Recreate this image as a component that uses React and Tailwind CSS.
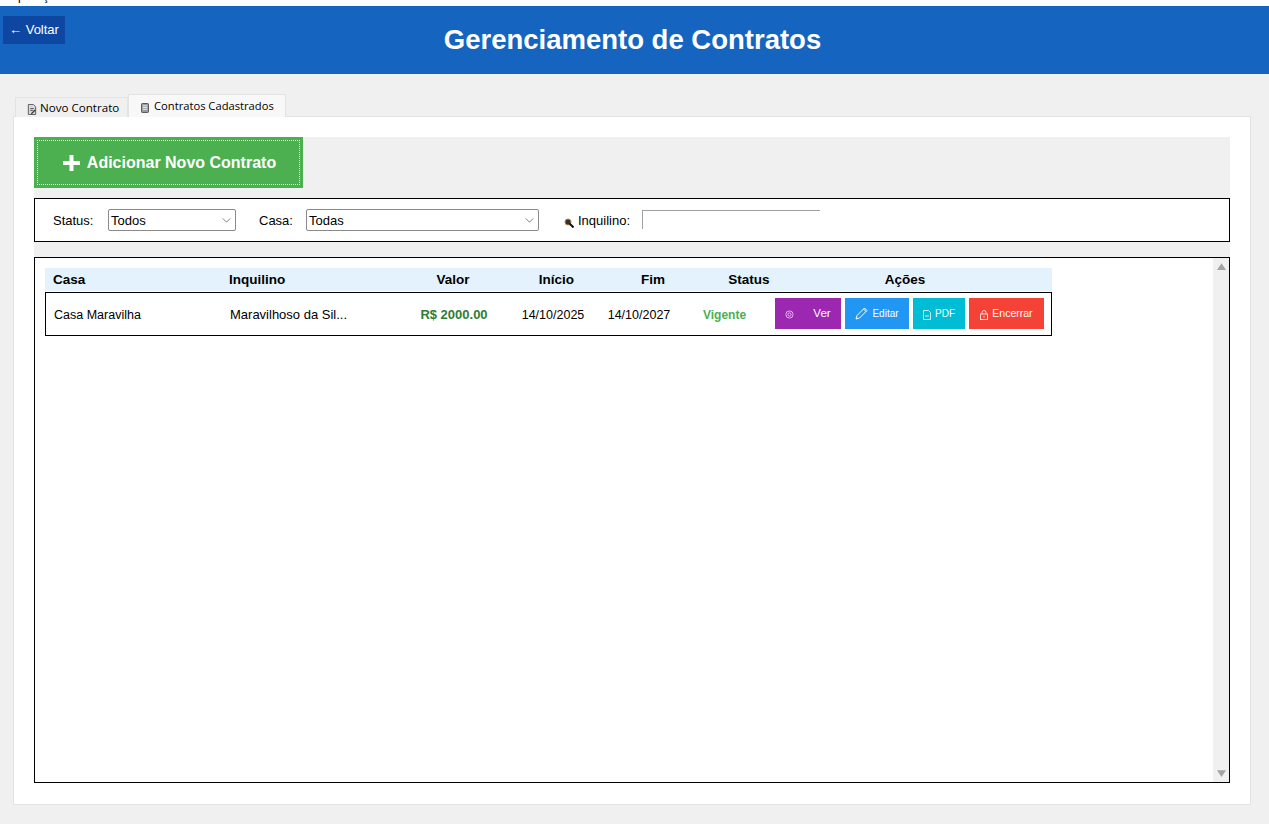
import React from 'react';

const ui = { fontFamily: '"Liberation Sans", Arial, sans-serif' };
const tabFont = { fontFamily: '"Open Sans", "Noto Sans", sans-serif' };

// small raster-like icons from the original app
const DocIcon = ({ className }) => (
  <svg viewBox="0 0 10 12" className={className}>
    <path d="M1 .5h5.500L9 3v8.500H1z" fill="#d9d9d9" stroke="#555" />
    <path d="M3 5h4M3 7h3" stroke="#555" />
    <path d="M4 10l4-4 1 1-4 4H4z" fill="#333" />
  </svg>
);

const BookIcon = ({ className }) => (
  <svg viewBox="0 0 9 11" className={className}>
    <rect x=".5" y=".5" width="8" height="10" rx="1" fill="#9aa0a0" stroke="#444" />
    <path d="M2 3h5M2 5h5M2 7h5" stroke="#eee" />
  </svg>
);

const SearchIcon = () => (
  <svg viewBox="0 0 10 10" className="w-[10px] h-[10px] mt-[5px]">
    <circle cx="4" cy="4" r="3" fill="#333" stroke="#b5804a" />
    <path d="M5.500 5.500L9.500 9.500" stroke="#111" strokeWidth="2" />
  </svg>
);

const Chevron = () => (
  <svg viewBox="0 0 10 6" className="w-[9px] h-[5px]" fill="none" stroke="#666">
    <path d="M.5.5L5 5 9.500.5" />
  </svg>
);

const EyeIcon = () => (
  <svg viewBox="0 0 10 10" className="w-[9px] h-[9px] mt-[3px]" fill="none" stroke="#e6c4ec">
    <circle cx="5" cy="5" r="4" />
    <circle cx="5" cy="5" r="1.800" />
  </svg>
);

const PencilIcon = () => (
  <svg viewBox="0 0 13 13" className="w-[13px] h-[13px]" fill="none" stroke="#fff">
    <path d="M1 12l1-3.500L9.500 1 12 3.500 4.500 11z" />
    <path d="M8.500 2l2.500 2.500" />
  </svg>
);

const PageIcon = () => (
  <svg viewBox="0 0 8 10" className="w-[8px] h-[10px] mt-[3px]" fill="none" stroke="#c9eef4">
    <path d="M.5.5h5l2 2v7H.5z" />
    <path d="M2 6h4" />
  </svg>
);

const LockIcon = () => (
  <svg viewBox="0 0 8 10" className="w-[8px] h-[10px] mt-[3px]" fill="none" stroke="#ffdcd8">
    <rect x=".5" y="4" width="7" height="5.500" />
    <path d="M2 4V2.500a2 2 0 014 0V4M4 6v1.500" />
  </svg>
);

const columns = [
  { label: 'Casa', cls: 'w-[184px] pl-2 text-left' },
  { label: 'Inquilino', cls: 'w-[180px] text-left' },
  { label: 'Valor', cls: 'w-[88px] text-center' },
  { label: 'Início', cls: 'w-[119px] text-center' },
  { label: 'Fim', cls: 'w-[74px] text-center' },
  { label: 'Status', cls: 'w-[118px] text-center' },
  { label: 'Ações', cls: 'w-[194px] text-center' },
];

const ActionButton = ({ color, width, children }) => (
  <div className={`flex items-center justify-center h-[31px] text-white ${color} ${width}`}>
    {children}
  </div>
);

const App = () => {
  return (
    <div className="relative w-[1269px] h-[824px] overflow-hidden bg-[#f0f0f0] flex flex-col" style={ui}>
      {/* strip of the window above, only the bottoms of the letters show */}
      <div className="h-[6px] bg-white overflow-hidden relative">
        <span className="absolute left-[10px] top-[-13px] text-[12px] text-black">Aplicação</span>
      </div>

      {/* header */}
      <div className="relative h-[68px] bg-[#1565c0] flex justify-center pt-[15px] pr-[4px]">
        <h1 className="text-[27.5px] leading-[38px] font-bold text-white">Gerenciamento de Contratos</h1>
        <div className="absolute left-[3px] top-[10px] w-[62px] h-[28px] bg-[#0d47a1] text-white text-[13px] flex items-center justify-center">
          ← Voltar
        </div>
      </div>

      {/* tabs */}
      <div className="relative z-10 flex items-end h-[43px] -mb-px pl-[15px]" style={tabFont}>
        <div className="flex items-center gap-[3px] w-[113px] h-[20px] pl-[11px] pt-[1px] bg-[#f0f0f0] border border-b-0 border-[#e3e3e3] text-[11.6px] text-black">
          <DocIcon className="w-[10px] h-[11px] mt-[3px]" />
          <span>Novo Contrato</span>
        </div>
        <div className="flex items-center gap-[5px] w-[158px] h-[23px] pl-[12px] bg-[#f8f8f8] border border-b-0 border-[#e3e3e3] text-[11.2px] text-black">
          <BookIcon className="w-[8px] h-[10px] mt-[3px]" />
          <span>Contratos Cadastrados</span>
        </div>
      </div>

      {/* tab panel */}
      <div className="mx-[13px] w-[1238px] h-[689px] bg-white border border-[#e3e3e3] pl-[20px] pr-[20px] pt-[20px]">
        <div className="w-[1196px] h-[61px] bg-[#f0f0f0]">
          <div className="w-[269px] h-[51px] bg-[#4caf50] p-[3px]">
            <div className="h-full border border-dotted border-white flex items-center justify-center gap-[7px] pl-[2px] text-white text-[16px] font-bold">
              <svg viewBox="0 0 17 16" className="w-[17px] h-[16px]" fill="#fff">
                <path d="M6.500 0h4v6h6.500v4h-6.500v6h-4v-6H0V6h6.500z" />
              </svg>
              <span>Adicionar Novo Contrato</span>
            </div>
          </div>
        </div>

        {/* filters */}
        <div className="w-[1196px] h-[44px] bg-white border border-black flex items-center pl-[18px] text-[13px] text-black">
          <span className="w-[55px] pt-[2px]">Status:</span>
          <div className="w-[128px] h-[22px] border border-[#8a8a8a] rounded-[2px] flex items-center justify-between pl-[2px] pr-[4px]">
            <span className="pt-[2px]">Todos</span>
            <Chevron />
          </div>
          <span className="ml-[23px] w-[47px] pt-[2px]">Casa:</span>
          <div className="w-[233px] h-[22px] border border-[#8a8a8a] rounded-[2px] flex items-center justify-between pl-[2px] pr-[4px]">
            <span className="pt-[2px]">Todas</span>
            <Chevron />
          </div>
          <div className="ml-[25px] w-[78px] flex items-center gap-[4px]">
            <SearchIcon />
            <span className="pt-[2px]">Inquilino:</span>
          </div>
          <div className="w-[178px] h-[19px] self-start mt-[11px] border-t border-l border-[#a0a0a0]"></div>
        </div>

        <div className="h-[15px] w-[1196px] bg-[#f0f0f0]"></div>

        {/* contracts list */}
        <div className="w-[1196px] h-[526px] border border-black bg-white flex">
          <div className="flex-1 pl-[10px] pt-[10px]">
            <div className="w-[1007px] h-[23px] pt-[2px] bg-[#e3f2fd] flex items-center text-[13.5px] font-bold text-black">
              {columns.map((col) => (
                <div key={col.label} className={col.cls}>{col.label}</div>
              ))}
            </div>
            <div className="mt-px w-[1007px] h-[44px] pt-[2px] border border-black flex items-center text-[12.5px] text-black">
              <div className="w-[175px] pl-[8px]">Casa Maravilha</div>
              <div className="w-[180px] pl-[9px] text-[13px]">Maravilhoso da Sil...</div>
              <div className="w-[106px] text-center text-[13px] font-bold text-[#2e7d32]">R$ 2000.00</div>
              <div className="w-[92px] text-center">14/10/2025</div>
              <div className="w-[80px] text-center">14/10/2027</div>
              <div className="w-[91px] text-center text-[12px] font-bold text-[#4caf50]">Vigente</div>
              <div className="flex items-center gap-[4px] ml-[5px] -mt-[4px]">
                <ActionButton color="bg-[#9c27b0]" width="w-[66px] gap-[19px]">
                  <EyeIcon />
                  <span className="text-[11.500px] pt-[2px]">Ver</span>
                </ActionButton>
                <ActionButton color="bg-[#2196f3]" width="w-[64px] gap-[4px]">
                  <PencilIcon />
                  <span className="text-[10px] pt-[1px]">Editar</span>
                </ActionButton>
                <ActionButton color="bg-[#00bcd4]" width="w-[52px] gap-[4px]">
                  <PageIcon />
                  <span className="text-[10px] pt-[1px]">PDF</span>
                </ActionButton>
                <ActionButton color="bg-[#f44336]" width="w-[75px] gap-[4px]">
                  <LockIcon />
                  <span className="text-[10.500px] pt-[2px]">Encerrar</span>
                </ActionButton>
              </div>
            </div>
          </div>

          {/* scrollbar */}
          <div className="w-[16px] h-full bg-[#f0f0f0] flex flex-col items-center justify-between py-[5px]">
            <svg viewBox="0 0 8 6" className="w-[9px] h-[7px]" fill="#a3a3a3"><path d="M4 0l4 6H0z" /></svg>
            <svg viewBox="0 0 8 6" className="w-[9px] h-[7px]" fill="#a3a3a3"><path d="M0 0h8L4 6z" /></svg>
          </div>
        </div>
      </div>
    </div>
  );
};

export default App;
